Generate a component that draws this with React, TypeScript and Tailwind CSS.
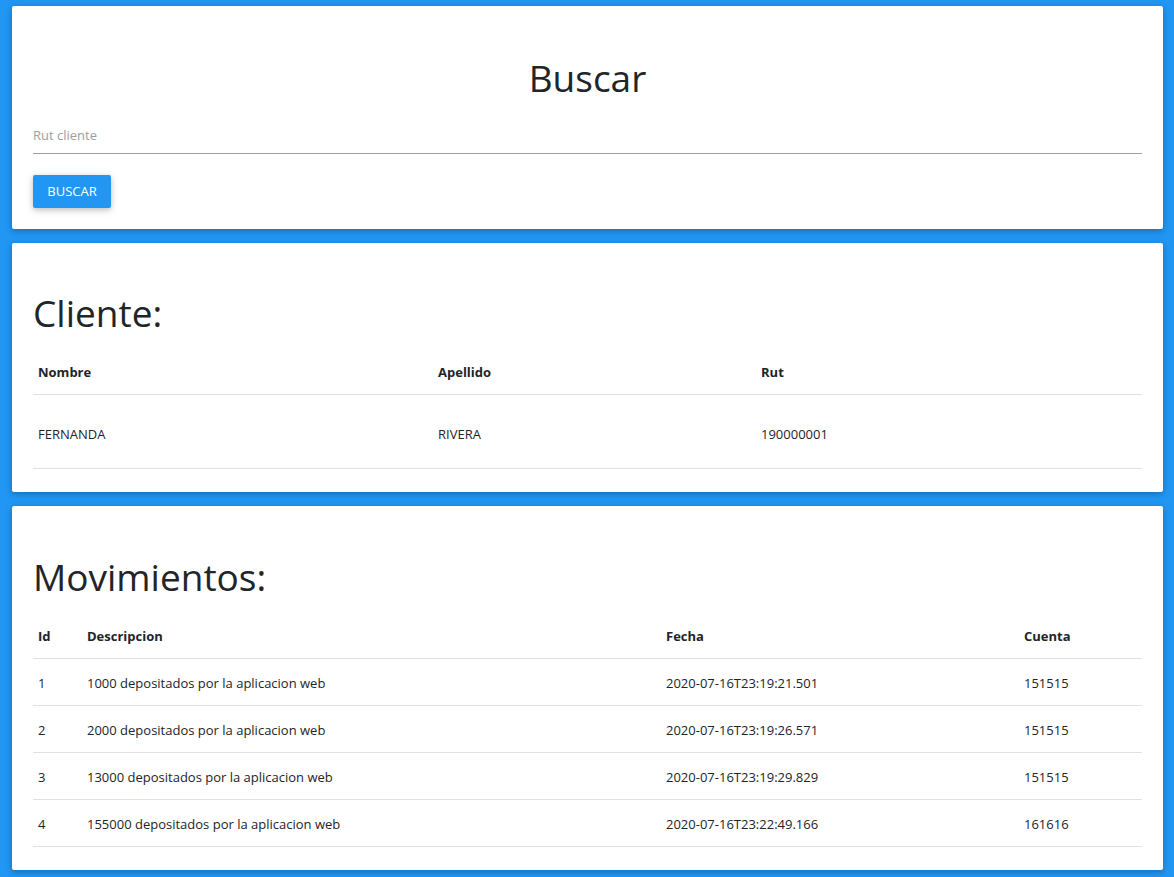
const clientes = [{ nombre: 'FERNANDA', apellido: 'RIVERA', rut: '190000001' }];

const movimientos = [
  { id: 1, descripcion: '1000 depositados por la aplicacion web', fecha: '2020-07-16T23:19:21.501', cuenta: '151515' },
  { id: 2, descripcion: '2000 depositados por la aplicacion web', fecha: '2020-07-16T23:19:26.571', cuenta: '151515' },
  { id: 3, descripcion: '13000 depositados por la aplicacion web', fecha: '2020-07-16T23:19:29.829', cuenta: '151515' },
  { id: 4, descripcion: '155000 depositados por la aplicacion web', fecha: '2020-07-16T23:22:49.166', cuenta: '161616' },
];

const Card = ({ children, className = '' }: { children: React.ReactNode; className?: string }) => (
  <div
    className={`ml-[12px] mr-[11px] bg-white rounded-[2px] px-[21px] shadow-[0_2px_5px_0_rgba(0,0,0,0.16),0_2px_10px_0_rgba(0,0,0,0.12)] ${className}`}
  >
    {children}
  </div>
);

export default function App() {
  return (
    <div className="min-h-[877px] bg-[#2196f3] pt-[6px] pb-[8px] flex flex-col gap-[14px] font-['Open_Sans',sans-serif] text-[#212529]">
      <Card className="h-[223px] pt-[50px]">
        <h1 className="text-center text-[37px] leading-[44px] font-normal">Buscar</h1>
        <input
          type="text"
          placeholder="Rut cliente"
          className="mt-[22px] block w-full h-[32px] pb-[6px] border-b border-[#9e9e9e] outline-none text-[13px] placeholder:text-[#9e9e9e]"
        />
        <button className="mt-[21px] h-[33px] w-[78px] rounded-[2px] bg-[#2196f3] text-white text-[13px] shadow-[0_2px_5px_0_rgba(0,0,0,0.16),0_2px_10px_0_rgba(0,0,0,0.12)]">
          BUSCAR
        </button>
      </Card>

      <Card className="h-[249px] pt-[46px]">
        <h2 className="text-[37px] leading-[48px] font-normal">Cliente:</h2>
        <div className="mt-[14px] text-[13px]">
          <div className="grid grid-cols-[400px_323px_1fr] h-[44px] pt-[1px] items-center border-b border-[#dee2e6] font-bold">
            <div className="pl-[5px]">Nombre</div>
            <div className="pl-[5px]">Apellido</div>
            <div className="pl-[5px]">Rut</div>
          </div>
          {clientes.map((c) => (
            <div key={c.rut} className="grid grid-cols-[400px_323px_1fr] h-[74px] pt-[6px] items-center border-b border-[#dee2e6]">
              <div className="pl-[5px]">{c.nombre}</div>
              <div className="pl-[5px]">{c.apellido}</div>
              <div className="pl-[5px]">{c.rut}</div>
            </div>
          ))}
        </div>
      </Card>

      <Card className="h-[364px] pt-[47px]">
        <h2 className="text-[37px] leading-[48px] font-normal">Movimientos:</h2>
        <div className="mt-[14px] text-[13px]">
          <div className="grid grid-cols-[49px_579px_358px_1fr] h-[44px] items-center border-b border-[#dee2e6] font-bold">
            <div className="pl-[5px]">Id</div>
            <div className="pl-[5px]">Descripcion</div>
            <div className="pl-[5px]">Fecha</div>
            <div className="pl-[5px]">Cuenta</div>
          </div>
          {movimientos.map((m) => (
            <div key={m.id} className="grid grid-cols-[49px_579px_358px_1fr] h-[47px] pt-[3px] items-center border-b border-[#dee2e6]">
              <div className="pl-[5px]">{m.id}</div>
              <div className="pl-[5px]">{m.descripcion}</div>
              <div className="pl-[5px]">{m.fecha}</div>
              <div className="pl-[5px]">{m.cuenta}</div>
            </div>
          ))}
        </div>
      </Card>
    </div>
  );
}
